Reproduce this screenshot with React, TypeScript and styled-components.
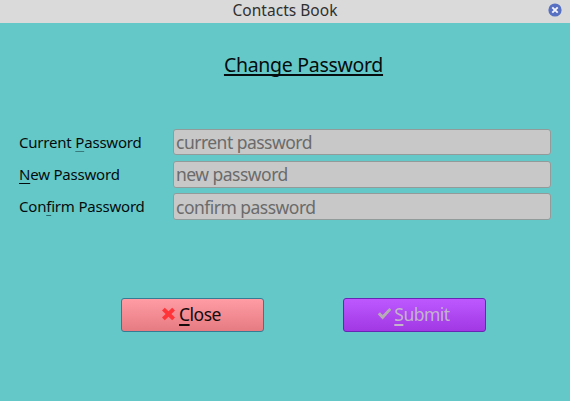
import React from 'react';
import styled, { createGlobalStyle } from 'styled-components';

const GlobalStyle = createGlobalStyle`
  * { box-sizing: border-box; }
  body { margin: 0; overflow: hidden; }
`;

const Window = styled.main`
  width: 570px;
  height: 401px;
  display: flex;
  flex-direction: column;
  background: #65c8c8;
  color: #050c0d;
  font-family: 'Noto Sans', 'Open Sans', sans-serif;
`;

const TitleBar = styled.header`
  height: 23px;
  flex: none;
  display: grid;
  grid-template-columns: 30px 1fr 30px;
  align-items: center;
  background: #dadada;
`;

const WindowTitle = styled.span`
  grid-column: 2;
  text-align: center;
  font-size: 15.5px;
  line-height: 22px;
  margin-top: -4px;
  letter-spacing: 0.02px;
  color: #303030;
`;

const CloseWindow = styled.button`
  width: 14px;
  height: 14px;
  margin: -4px 0 0 7.5px;
  padding: 0;
  border: 0;
  background: none;
  display: flex;
`;

const Heading = styled.h1`
  margin: 28px 0 0 37px;
  height: 28px;
  text-align: center;
  font-size: 19.5px;
  line-height: 28px;
  letter-spacing: -0.3px;
  font-weight: 400;
  text-decoration: underline;
  text-decoration-thickness: 1.5px;
  text-underline-offset: 2px;
  text-decoration-skip-ink: none;
`;

const Fields = styled.form`
  margin: 50px 19px 0;
  display: grid;
  grid-template-columns: 154px 378px;
  grid-template-rows: 26px 27px 27px;
  row-gap: 5.5px;
  align-items: center;
`;

const Label = styled.label`
  font-size: 15px;
  line-height: 26px;
  letter-spacing: -0.2px;
  margin-top: -1px;
  white-space: nowrap;
`;

const Key = styled.span<{ $color?: string; $thickness?: number }>`
  text-decoration: underline;
  text-decoration-color: ${(p) => p.$color ?? 'currentColor'};
  text-decoration-thickness: ${(p) => p.$thickness ?? 1}px;
  text-underline-offset: 3px;
  text-decoration-skip-ink: none;
`;

const Input = styled.input`
  width: 378px;
  height: 100%;
  padding: 0 2px;
  border: 1px solid #929a9a;
  border-radius: 3px;
  background: #c8c8c8;
  font: 17.5px 'Noto Sans', 'Open Sans', sans-serif;
  letter-spacing: -0.52px;
  outline: 0;
  &::placeholder { color: #6b6b6b; opacity: 1; }
`;

const Actions = styled.div`
  margin: 78px 0 0 121px;
  display: flex;
  gap: 79px;
`;

const Button = styled.button<{ $kind: 'close' | 'submit' }>`
  width: 143px;
  height: 34px;
  padding: 0 ${(p) => (p.$kind === 'close' ? 3 : 2)}px 2px 0;
  display: flex;
  align-items: center;
  justify-content: center;
  gap: ${(p) => (p.$kind === 'close' ? 3 : 2)}px;
  border: 1px solid ${(p) => (p.$kind === 'close' ? '#347c94' : '#6627b5')};
  border-radius: 3px;
  background: ${(p) => p.$kind === 'close'
    ? 'linear-gradient(#ff9ca4, #e67b82)'
    : 'linear-gradient(#bd58ff, #a138e4)'};
  color: ${(p) => (p.$kind === 'close' ? '#160b0c' : '#c3b3cb')};
  font: 17.5px 'Noto Sans', 'Open Sans', sans-serif;
  letter-spacing: -0.5px;
`;

const Glyph = styled.svg`
  display: block;
  flex: none;
`;

const fields = [
  { id: 'current', before: 'Current ', key: 'P', after: 'assword', hint: 'current password', line: '#397b7d' },
  { id: 'new', before: '', key: 'N', after: 'ew Password', hint: 'new password', line: '#050c0d' },
  { id: 'confirm', before: 'Con', key: 'f', after: 'irm Password', hint: 'confirm password', line: '#286468' },
];

export default function App() {
  return (
    <Window>
      <GlobalStyle />
      <TitleBar>
        <WindowTitle>Contacts Book</WindowTitle>
        <CloseWindow aria-label="Close window">
          <Glyph width="14" height="14" viewBox="0 0 14 14">
            <circle cx="7" cy="7" r="6.6" fill="#5870c2" />
            <path d="M4.3 4.3l5.4 5.4M9.7 4.3l-5.4 5.4" stroke="#f4f5fb" strokeWidth="1.9" />
          </Glyph>
        </CloseWindow>
      </TitleBar>
      <Heading>Change Password</Heading>
      <Fields>
        {fields.map((f) => (
          <React.Fragment key={f.id}>
            <Label htmlFor={f.id}>
              {f.before}<Key $color={f.line}>{f.key}</Key>{f.after}
            </Label>
            <Input id={f.id} type="password" placeholder={f.hint} />
          </React.Fragment>
        ))}
      </Fields>
      <Actions>
        <Button $kind="close">
          <Glyph width="15" height="14" viewBox="0 0 15 14">
            <path d="M3.8.8 7.5 4.3 11.2.8 14 3.5 10.4 7 14 10.5 11.2 13.2 7.5 9.7 3.8 13.2 1 10.5 4.6 7 1 3.5Z" fill="#ff3439" />
          </Glyph>
          <span><Key $thickness={2}>C</Key>lose</span>
        </Button>
        <Button $kind="submit">
          <Glyph width="15" height="14" viewBox="0 0 15 14">
            <path d="M.7 7.3 3 5.2 5.7 8 12.3.9 14.4 2.8 5.7 12.5Z" fill="#b5adb3" />
          </Glyph>
          <span><Key $thickness={2}>S</Key>ubmit</span>
        </Button>
      </Actions>
    </Window>
  );
}
